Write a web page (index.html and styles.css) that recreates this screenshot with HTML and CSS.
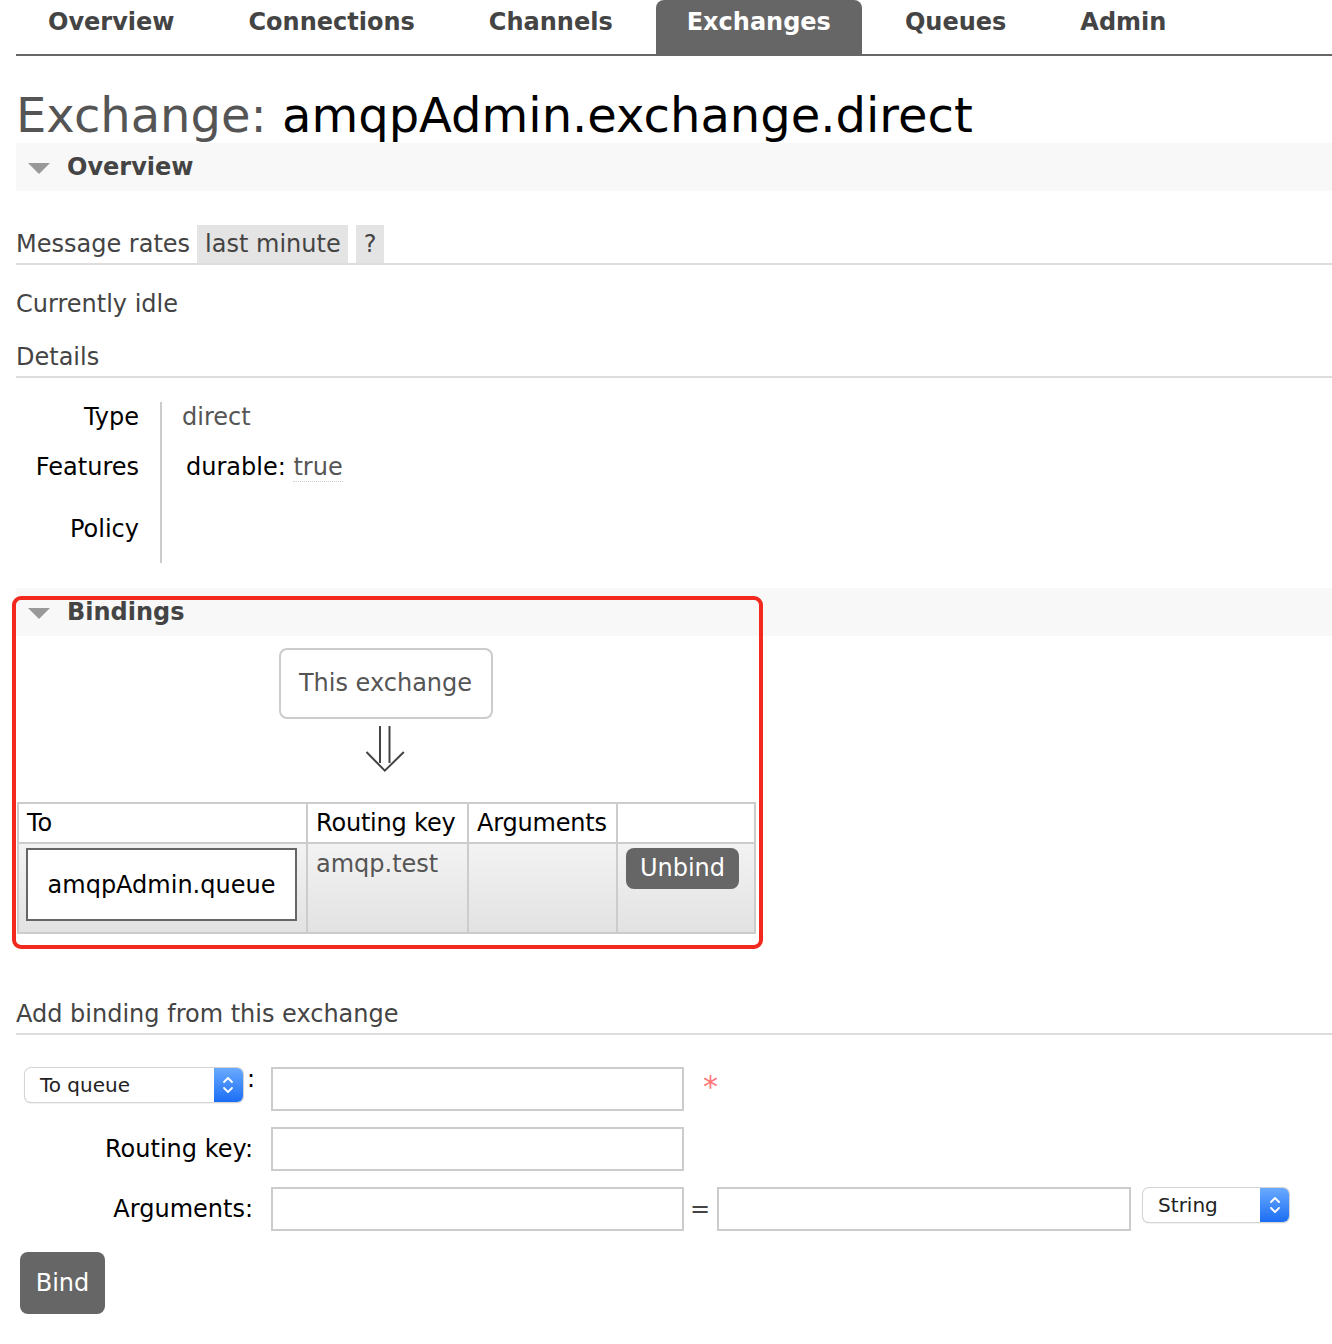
FILE: index.html
```html
<!DOCTYPE html>
<html lang="en">
<head>
<meta charset="utf-8">
<title>Exchange: amqpAdmin.exchange.direct</title>
<link rel="stylesheet" href="styles.css">
</head>
<body>
<nav class="tabs">
  <ul class="tab-list">
    <li class="tab">Overview</li>
    <li class="tab">Connections</li>
    <li class="tab">Channels</li>
    <li class="tab tab-active">Exchanges</li>
    <li class="tab">Queues</li>
    <li class="tab">Admin</li>
  </ul>
</nav>

<h1 class="title"><span class="title-label">Exchange:</span> <span class="title-name">amqpAdmin.exchange.direct</span></h1>

<section class="section">
  <div class="section-head"><span class="tri"></span>Overview</div>
  <h3 class="subhead rates-head">
    <span class="rates-label">Message rates</span>
    <span class="pill pill-range">last minute</span>
    <span class="pill pill-help">?</span>
  </h3>
  <p class="idle">Currently idle</p>
  <h3 class="subhead details-head">Details</h3>
  <div class="details">
    <div class="d-label">Type</div>
    <div class="d-value">direct</div>
    <div class="d-label">Features</div>
    <div class="d-value d-feature"><span class="feat-key">durable:</span> <span class="feat-val">true</span></div>
    <div class="d-label">Policy</div>
    <div class="d-value"></div>
  </div>
</section>

<section class="section bindings">
  <div class="section-head"><span class="tri"></span>Bindings</div>
  <div class="bind-wrap">
    <div class="exch-box">This exchange</div>
    <svg class="arrow" width="42" height="83" viewBox="0 0 42 83" aria-hidden="true">
      <path d="M15 7 V44 M24.5 7 V44 M1.5 33 L19.8 51.7 L38.8 33" fill="none" stroke="#444" stroke-width="2"/>
    </svg>
    <table class="bind-table">
      <thead>
        <tr>
          <th class="c-to">To</th>
          <th class="c-key">Routing key</th>
          <th class="c-args">Arguments</th>
          <th class="c-act"></th>
        </tr>
      </thead>
      <tbody>
        <tr>
          <td class="c-to"><div class="queue-box">amqpAdmin.queue</div></td>
          <td class="c-key key-val">amqp.test</td>
          <td class="c-args"></td>
          <td class="c-act"><button class="btn btn-unbind" type="button">Unbind</button></td>
        </tr>
      </tbody>
    </table>
  </div>
  <div class="highlight"></div>
</section>

<h3 class="subhead add-head">Add binding from this exchange</h3>
<form class="bind-form">
  <div class="form-row">
    <div class="f-label f-label-select">
      <div class="mac-select sel-dest"><span class="sel-text">To queue</span><span class="sel-arrows"><svg width="14" height="22" viewBox="0 0 14 22"><path d="M3 8 L7 4 L11 8 M3 14 L7 18 L11 14" fill="none" stroke="#fff" stroke-width="1.8" stroke-linecap="round" stroke-linejoin="round"/></svg></span></div>
      <span class="colon">:</span>
    </div>
    <input class="f-input" type="text">
    <span class="req">*</span>
  </div>
  <div class="form-row">
    <label class="f-label">Routing key:</label>
    <input class="f-input" type="text">
  </div>
  <div class="form-row">
    <label class="f-label">Arguments:</label>
    <input class="f-input" type="text">
    <span class="eq">=</span>
    <input class="f-input f-input-val" type="text">
    <div class="mac-select sel-type"><span class="sel-text">String</span><span class="sel-arrows"><svg width="14" height="22" viewBox="0 0 14 22"><path d="M3 8 L7 4 L11 8 M3 14 L7 18 L11 14" fill="none" stroke="#fff" stroke-width="1.8" stroke-linecap="round" stroke-linejoin="round"/></svg></span></div>
  </div>
  <button class="btn btn-bind" type="button">Bind</button>
</form>
</body>
</html>
```

FILE: styles.css
```css
html, body {
  margin: 0;
  background: #fff;
}
body {
  padding: 0 0 0 16px;
  font-family: "DejaVu Sans", Verdana, sans-serif;
  font-size: 24px;
  color: #444;
}

/* tabs */
.tabs {
  border-bottom: 2px solid #666;
  height: 54px;
}
.tab-list {
  list-style: none;
  margin: 0;
  padding: 0 0 0 1px;
  display: flex;
  height: 54px;
}
.tab {
  padding: 0 31px;
  margin-right: 12px;
  height: 54px;
  line-height: 44px;
  font-weight: bold;
  color: #444;
  border-radius: 8px 8px 0 0;
}
.tab-active {
  background: #666;
  color: #fff;
}

/* title */
.title {
  margin: 31px 0 0;
  font-size: 48px;
  line-height: 56px;
  height: 56px;
  font-weight: normal;
  color: #000;
  white-space: nowrap;
}
.title-label {
  color: #555;
}

/* sections */
.section {
  position: relative;
}
.section-head {
  height: 48px;
  line-height: 48px;
  background: #f8f8f8;
  font-weight: bold;
  color: #444;
  display: flex;
  align-items: center;
}
.tri {
  width: 0;
  height: 0;
  border-left: 11px solid transparent;
  border-right: 11px solid transparent;
  border-top: 11px solid #999;
  margin: 2px 17px 0 12px;
}

.subhead {
  margin: 0;
  font-size: 24px;
  font-weight: normal;
  height: 38px;
  line-height: 38px;
  border-bottom: 2px solid #ddd;
  color: #444;
}
.rates-head {
  margin-top: 34px;
  display: flex;
}
.pill {
  background: #e4e4e4;
  color: #444;
}
.pill-range {
  margin-left: 7px;
  padding: 0 7px 0 8px;
}
.pill-help {
  margin-left: 8px;
  padding: 0 8px;
}
.idle {
  margin: 24px 0 0;
  line-height: 30px;
  color: #444;
}
.details-head {
  margin-top: 19px;
}

.details {
  margin-top: 24px;
  display: grid;
  grid-template-columns: 146px 1fr;
  grid-template-rows: 50px 62px 49px;
  line-height: 30px;
}
.d-label {
  text-align: right;
  padding-right: 21px;
  border-right: 2px solid #ccc;
  color: #000;
}
.d-value {
  padding-left: 20px;
  color: #555;
}
.d-feature {
  padding-left: 24px;
}
.feat-key {
  color: #000;
}
.feat-val {
  color: #555;
  border-bottom: 1px dotted #ccc;
}

/* bindings */
.bindings {
  margin-top: 25px;
}
.bind-wrap {
  width: 737px;
  margin-left: 1px;
}
.exch-box {
  width: 214px;
  height: 71px;
  box-sizing: border-box;
  margin: 12px auto 0;
  border: 2px solid #ccc;
  border-radius: 8px;
  text-align: center;
  line-height: 67px;
  color: #555;
}
.arrow {
  display: block;
  margin: 0 auto;
}
.bind-table {
  border-collapse: collapse;
  width: 737px;
  table-layout: fixed;
}
.bind-table th,
.bind-table td {
  box-sizing: border-box;
  border: 2px solid #ccc;
  padding: 0 2px 0 8px;
  text-align: left;
  vertical-align: top;
  white-space: nowrap;
}
.bind-table th {
  font-weight: normal;
  color: #000;
  height: 40px;
  line-height: 38px;
  background: #fff;
  letter-spacing: -0.2px;
}
.bind-table tbody tr {
  background: linear-gradient(#f3f3f3, #e2e2e2);
}
.bind-table td {
  height: 90px;
}
.c-to { width: 289px; }
.c-key { width: 161px; }
.c-args { width: 149px; }
.c-act { width: 138px; }
.bind-table td.c-to {
  padding: 4px 8px 0 7px;
}
.queue-box {
  width: 271px;
  height: 73px;
  box-sizing: border-box;
  border: 2px solid #666;
  background: #fff;
  color: #000;
  text-align: center;
  line-height: 71px;
}
.key-val {
  color: #555;
  line-height: 40px;
  padding-top: 1px;
}
.bind-table td.c-act {
  padding-top: 4px;
}
.btn {
  font-family: "DejaVu Sans", Verdana, sans-serif;
  font-size: 24px;
  background: #666;
  color: #fff;
  border: 0;
  border-radius: 8px;
  padding: 0;
  cursor: pointer;
}
.btn-unbind {
  width: 113px;
  height: 41px;
  line-height: 41px;
}

.highlight {
  position: absolute;
  left: -4px;
  top: 8px;
  width: 751px;
  height: 353px;
  box-sizing: border-box;
  border: 4px solid #f3281e;
  border-radius: 9px;
  pointer-events: none;
}

/* add binding */
.add-head {
  margin-top: 61px;
}
.bind-form {
  margin-top: 32px;
}
.form-row {
  display: flex;
  align-items: flex-start;
  height: 44px;
  margin-bottom: 16px;
}
.f-label {
  width: 237px;
  text-align: right;
  line-height: 44px;
  color: #000;
}
.f-label-select {
  display: flex;
  justify-content: flex-end;
  align-items: flex-start;
}
.colon {
  line-height: 24px;
  margin-left: 4px;
  margin-right: -2px;
}
.f-input {
  margin: 0 0 0 18px;
  width: 413px;
  height: 44px;
  box-sizing: border-box;
  border: 2px solid #ccc;
  background: #fff;
  font-size: 24px;
  padding: 0 6px;
}
.f-input-val {
  margin-left: 7px;
  width: 414px;
}
.req {
  margin-left: 19px;
  color: #f77;
  font-size: 30px;
  line-height: 40px;
}
.eq {
  margin-left: 6px;
  line-height: 44px;
  color: #444;
}
.mac-select {
  display: flex;
  height: 34px;
  box-sizing: border-box;
  margin-top: 1px;
  background: #fff;
  border-radius: 6px;
  box-shadow: 0 0 0 1px #d4d4d4, 0 1px 2px rgba(0,0,0,0.2);
  font-size: 20px;
  color: #222;
  text-align: left;
  overflow: hidden;
}
.sel-text {
  flex: 1;
  line-height: 34px;
  padding-left: 15px;
}
.sel-arrows {
  width: 29px;
  background: linear-gradient(#6aaaff, #1b6ef3);
  display: flex;
  align-items: center;
  justify-content: center;
}
.sel-dest {
  width: 218px;
}
.sel-type {
  width: 146px;
  margin-left: 12px;
}
.btn-bind {
  display: block;
  margin: 21px 0 0 4px;
  width: 85px;
  height: 62px;
}
```
